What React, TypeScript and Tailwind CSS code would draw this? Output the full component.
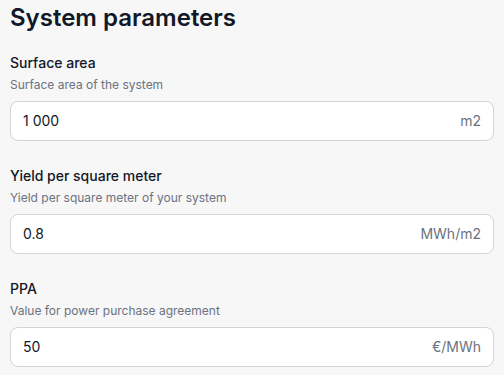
import React from "react";

interface Field {
  label: string;
  hint: string;
  value: string;
  unit: string;
}

const fields: Field[] = [
  { label: "Surface area", hint: "Surface area of the system", value: "1 000", unit: "m2" },
  { label: "Yield per square meter", hint: "Yield per square meter of your system", value: "0.8", unit: "MWh/m2" },
  { label: "PPA", hint: "Value for power purchase agreement", value: "50", unit: "€/MWh" },
];

function ParamField({ label, hint, value, unit }: Field) {
  return (
    <div className="flex flex-col">
      <label className="text-sm font-medium leading-5 text-[#111827]">{label}</label>
      <p className="mt-[4px] text-xs leading-4 text-[#6b7280]">{hint}</p>
      <div className="mt-[8px] flex h-[40px] items-center rounded-lg border border-[#d4d4d8] bg-white px-3">
        <input
          defaultValue={value}
          className="flex-1 bg-transparent text-sm text-[#111827] outline-none"
        />
        <span className="text-sm text-[#6b7280]">{unit}</span>
      </div>
    </div>
  );
}

export default function App() {
  return (
    <div
      className="min-h-screen bg-[#f7f7f7] px-[10px] pt-[2px]"
      style={{ fontFamily: "Inter, 'Noto Sans', sans-serif" }}
    >
      <h1 className="text-2xl font-semibold leading-8 text-[#111827]">System parameters</h1>
      <div className="mt-[19px] flex flex-col gap-[25px]">
        {fields.map((f) => (
          <ParamField key={f.label} {...f} />
        ))}
      </div>
    </div>
  );
}
